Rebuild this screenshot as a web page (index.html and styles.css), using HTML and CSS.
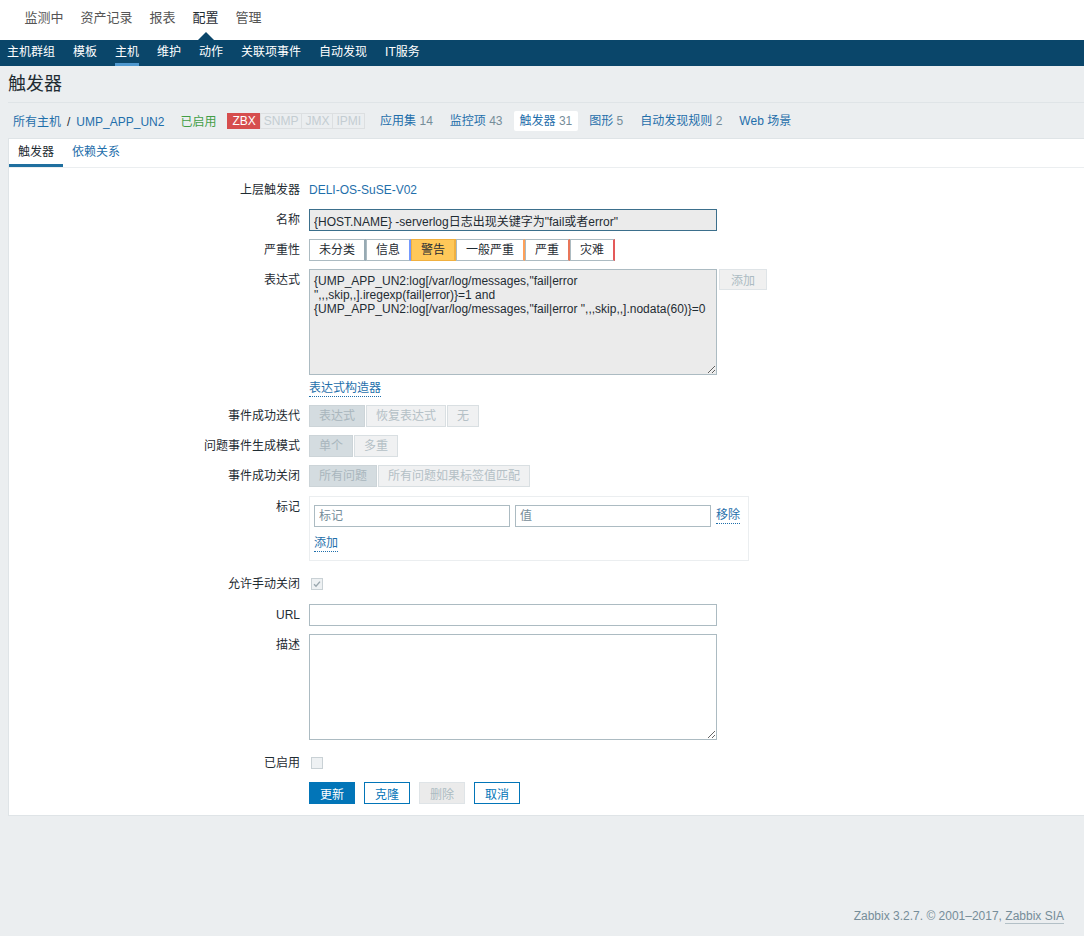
FILE: index.html
```html
<!DOCTYPE html>
<html>
<head>
    <meta charset="utf-8">
    <link rel="stylesheet" href="styles.css">
</head>
<body>
    <header class="top-nav">
        <ul class="main-menu">
            <li><a href="#">监测中</a></li>
            <li><a href="#">资产记录</a></li>
            <li><a href="#">报表</a></li>
            <li class="selected"><a href="#">配置</a></li>
            <li><a href="#">管理</a></li>
        </ul>
    </header>

    <nav class="sub-nav">
        <a href="#">主机群组</a>
        <a href="#">模板</a>
        <a href="#" class="selected">主机</a>
        <a href="#">维护</a>
        <a href="#">动作</a>
        <a href="#">关联项事件</a>
        <a href="#">自动发现</a>
        <a href="#">IT服务</a>
    </nav>

    <main class="page">
        <h1 class="header-title">触发器</h1>

        <div class="host-nav">
            <span class="crumbs"><a href="#">所有主机</a><span class="sep">/</span><a href="#">UMP_APP_UN2</a></span>
            <span class="status">已启用</span>
            <span class="badges">
                <span class="badge zbx">ZBX</span><span class="badge">SNMP</span><span class="badge">JMX</span><span class="badge">IPMI</span>
            </span>
            <span class="host-item"><a href="#">应用集</a> <span class="count">14</span></span>
            <span class="host-item"><a href="#">监控项</a> <span class="count">43</span></span>
            <span class="host-item current"><a href="#">触发器</a> <span class="count">31</span></span>
            <span class="host-item"><a href="#">图形</a> <span class="count">5</span></span>
            <span class="host-item"><a href="#">自动发现规则</a> <span class="count">2</span></span>
            <span class="host-item"><a href="#">Web 场景</a></span>
        </div>

        <div class="panel">
            <ul class="tabs">
                <li class="active">触发器</li>
                <li><a href="#">依赖关系</a></li>
            </ul>

            <form class="form">
                <div class="row">
                    <label class="label">上层触发器</label>
                    <div class="field"><a href="#" class="value-link">DELI-OS-SuSE-V02</a></div>
                </div>

                <div class="row">
                    <label class="label">名称</label>
                    <div class="field">
                        <input type="text" class="text-input readonly focused" readonly value='{HOST.NAME} -serverlog日志出现关键字为"fail或者error"'>
                    </div>
                </div>

                <div class="row">
                    <label class="label">严重性</label>
                    <div class="field">
                        <div class="severity">
                            <span class="sev-0">未分类</span>
                            <span class="sev-1">信息</span>
                            <span class="sev-2 selected">警告</span>
                            <span class="sev-3">一般严重</span>
                            <span class="sev-4">严重</span>
                            <span class="sev-5">灾难</span>
                        </div>
                    </div>
                </div>

                <div class="row">
                    <label class="label">表达式</label>
                    <div class="field column">
                        <div class="expr-line">
                            <textarea class="textarea readonly" readonly>{UMP_APP_UN2:log[/var/log/messages,"fail|error ",,,skip,,].iregexp(fail|error)}=1 and {UMP_APP_UN2:log[/var/log/messages,"fail|error ",,,skip,,].nodata(60)}=0</textarea>
                            <button type="button" class="btn-grey" disabled>添加</button>
                        </div>
                        <a href="#" class="dotted-link builder">表达式构造器</a>
                    </div>
                </div>

                <div class="row">
                    <label class="label">事件成功迭代</label>
                    <div class="field">
                        <div class="seg-disabled">
                            <span class="selected">表达式</span><span>恢复表达式</span><span>无</span>
                        </div>
                    </div>
                </div>

                <div class="row">
                    <label class="label">问题事件生成模式</label>
                    <div class="field">
                        <div class="seg-disabled">
                            <span class="selected">单个</span><span>多重</span>
                        </div>
                    </div>
                </div>

                <div class="row">
                    <label class="label">事件成功关闭</label>
                    <div class="field">
                        <div class="seg-disabled">
                            <span class="selected">所有问题</span><span>所有问题如果标签值匹配</span>
                        </div>
                    </div>
                </div>

                <div class="row push-1">
                    <label class="label">标记</label>
                    <div class="field">
                        <div class="tags-box">
                            <div class="tag-row">
                                <input type="text" class="text-input tag-input" placeholder="标记">
                                <input type="text" class="text-input tag-input" placeholder="值">
                                <a href="#" class="dotted-link">移除</a>
                            </div>
                            <a href="#" class="dotted-link">添加</a>
                        </div>
                    </div>
                </div>

                <div class="row push-4">
                    <label class="label">允许手动关闭</label>
                    <div class="field">
                        <span class="checkbox checked">
                            <svg width="8" height="8" viewBox="0 0 8 8"><polyline points="1,4.2 3,6.2 7,1.6" fill="none" stroke="#9aa7ae" stroke-width="1.4"/></svg>
                        </span>
                    </div>
                </div>

                <div class="row push-1">
                    <label class="label">URL</label>
                    <div class="field"><input type="text" class="text-input"></div>
                </div>

                <div class="row">
                    <label class="label">描述</label>
                    <div class="field"><textarea class="textarea"></textarea></div>
                </div>

                <div class="row push-4">
                    <label class="label">已启用</label>
                    <div class="field"><span class="checkbox"></span></div>
                </div>

                <div class="row">
                    <span class="label"></span>
                    <div class="field buttons">
                        <button type="button" class="btn">更新</button>
                        <button type="button" class="btn-alt">克隆</button>
                        <button type="button" class="btn-grey" disabled>删除</button>
                        <button type="button" class="btn-alt">取消</button>
                    </div>
                </div>
            </form>
        </div>
    </main>

    <footer class="footer">
        Zabbix 3.2.7. © 2001–2017, <a href="#">Zabbix SIA</a>
    </footer>
</body>
</html>
```

FILE: styles.css
```css
body {
    margin: 0;
    background-color: #ebeef0;
    color: #1f2c33;
    font-family: "Liberation Sans", "Noto Sans CJK SC", Arial, sans-serif;
    font-size: 12px;
}

a {
    color: #1f6fab;
    text-decoration: none;
}

/* top menu */
.top-nav {
    height: 40px;
    background-color: #fff;
}

.main-menu {
    display: flex;
    margin: 0;
    padding: 0 0 0 16px;
    list-style: none;
}

.main-menu li {
    position: relative;
    height: 40px;
}

.main-menu a {
    display: block;
    padding: 8px 8.5px 0;
    line-height: 20px;
    font-size: 13px;
    color: #555;
}

.main-menu li.selected a {
    color: #1f2c33;
}

.main-menu li.selected::after {
    content: "";
    position: absolute;
    bottom: 0;
    left: 50%;
    margin-left: -8px;
    border-left: 8px solid transparent;
    border-right: 8px solid transparent;
    border-bottom: 8px solid #0a466a;
}

.sub-nav {
    display: flex;
    gap: 18px;
    height: 26px;
    padding-left: 7px;
    background-color: #0a466a;
}

.sub-nav a {
    display: block;
    padding-top: 2px;
    line-height: 21px;
    color: #fff;
    border-bottom: 3px solid transparent;
}

.sub-nav a.selected {
    border-bottom-color: #4f98cf;
}

/* page header */
.page {
    padding-left: 8px;
}

.header-title {
    margin: 0;
    height: 36px;
    line-height: 36px;
    font-size: 18px;
    font-weight: normal;
    border-bottom: 1px solid #dfe4e7;
}

.host-nav {
    display: flex;
    align-items: center;
    gap: 5px;
    height: 35px;
}

.crumbs {
    padding: 0 5px;
}

.crumbs .sep {
    margin: 0 6px;
    color: #1f2c33;
}

.status {
    padding: 0 6px;
    color: #429e47;
}

.badges {
    display: flex;
    margin-right: 4px;
}

.badge {
    padding: 0 3px;
    line-height: 14px;
    border: 1px solid #dcdfe1;
    margin-left: -1px;
    color: #c4cdd2;
}

.badge.zbx {
    margin-left: 0;
    padding: 0 4px;
    background-color: #d64e4e;
    border-color: #d64e4e;
    color: #fff;
}

.host-item {
    padding: 3px 6px;
    line-height: 14px;
    border-radius: 2px;
}

.host-item.current {
    background-color: #fff;
}

.count {
    color: #768d99;
}

/* panel */
.panel {
    background-color: #fff;
    border: 1px solid #dfe4e7;
    border-right: none;
}

.tabs {
    display: flex;
    margin: 0;
    padding: 0;
    list-style: none;
    border-bottom: 1px solid #ebeef0;
}

.tabs li {
    padding: 5px 9px 4px;
    line-height: 16px;
    border-bottom: 3px solid transparent;
}

.tabs li.active {
    border-bottom-color: #1f6f9f;
}

.form {
    display: flex;
    flex-direction: column;
    gap: 8px;
    padding: 11px 0 11px;
}

.row {
    display: grid;
    grid-template-columns: 291px 1fr;
    column-gap: 9px;
}

.push-1 { margin-top: 1px; }
.push-4 { margin-top: 4px; }

.label {
    text-align: right;
    line-height: 22px;
}

.field {
    display: flex;
    align-items: center;
    min-height: 22px;
}

.field.column {
    flex-direction: column;
    align-items: flex-start;
}

.value-link {
    line-height: 22px;
}

.text-input {
    box-sizing: border-box;
    width: 408px;
    height: 22px;
    margin: 0;
    padding: 0 4px;
    border: 1px solid #acbbc2;
    background-color: #fff;
    color: #1f2c33;
    font: inherit;
    outline: none;
}

.text-input::placeholder {
    color: #768d99;
}

.readonly {
    background-color: #ebebeb;
}

.focused {
    border-color: #3b6f8c;
}

.textarea {
    box-sizing: border-box;
    display: block;
    width: 408px;
    height: 106px;
    margin: 0;
    padding: 4px 4px;
    border: 1px solid #acbbc2;
    color: #1f2c33;
    font: inherit;
    line-height: 14px;
    outline: none;
}

.expr-line {
    display: flex;
    align-items: flex-start;
    gap: 2px;
}

.builder {
    margin-top: 6px;
    line-height: 16px;
}

.dotted-link {
    border-bottom: 1px dotted #1f6fab;
    line-height: 15px;
}

/* severity */
.severity {
    display: flex;
}

.severity span {
    height: 22px;
    box-sizing: border-box;
    padding: 0 9px;
    line-height: 20px;
    border: 1px solid #acbbc2;
    background-color: #fff;
}

.severity .sev-0 { border-right: 2px solid #97aab3; }
.severity .sev-1 { border-right: 2px solid #7499ff; }
.severity .sev-2 { border-right: 2px solid #ffc859; }
.severity .sev-3 { border-right: 2px solid #ffa059; }
.severity .sev-4 { border-right: 2px solid #e97659; }
.severity .sev-5 { border-right: 2px solid #e45959; }

.severity span.selected {
    background-color: #ffc859;
    border-color: #f0b040;
}

.seg-disabled {
    display: flex;
    gap: 1px;
}

.seg-disabled span {
    height: 22px;
    box-sizing: border-box;
    padding: 0 9px;
    line-height: 20px;
    border: 1px solid #d9dfe2;
    background-color: #f0f1f2;
    color: #b4c0c6;
}

.seg-disabled span.selected {
    background-color: #d4dce0;
    border-color: #ccd4d8;
    color: #a9b6bd;
}

/* tags */
.tags-box {
    display: flex;
    flex-direction: column;
    align-items: flex-start;
    gap: 9px;
    padding: 8px 8px 8px 4px;
    border: 1px solid #ebeef0;
}

.tag-row {
    display: flex;
    align-items: center;
    gap: 5px;
}

.tag-input {
    width: 196px;
}

.checkbox {
    box-sizing: border-box;
    display: flex;
    align-items: center;
    justify-content: center;
    width: 12px;
    height: 12px;
    margin-left: 2px;
    border: 1px solid #c9d1d5;
    background-color: #eef1f3;
}

/* buttons */
.buttons {
    gap: 9px;
}

.btn,
.btn-alt,
.btn-grey {
    height: 22px;
    margin: 0;
    padding: 0 10px;
    font: inherit;
    border: 1px solid #0275b8;
    cursor: pointer;
}

.btn {
    background-color: #0275b8;
    color: #fff;
}

.btn-alt {
    background-color: #fff;
    color: #0275b8;
}

.btn-grey {
    background-color: #ebebeb;
    border-color: #dfe4e7;
    color: #acbbc2;
    cursor: default;
}

.expr-line .btn-grey {
    height: 21px;
    padding: 0 11px;
    background-color: #f0f0f0;
}

/* footer */
.footer {
    margin-top: 92px;
    padding-right: 20px;
    line-height: 16px;
    text-align: right;
    color: #768d99;
}

.footer a {
    color: #768d99;
    border-bottom: 1px solid #b3c0c7;
}
```
